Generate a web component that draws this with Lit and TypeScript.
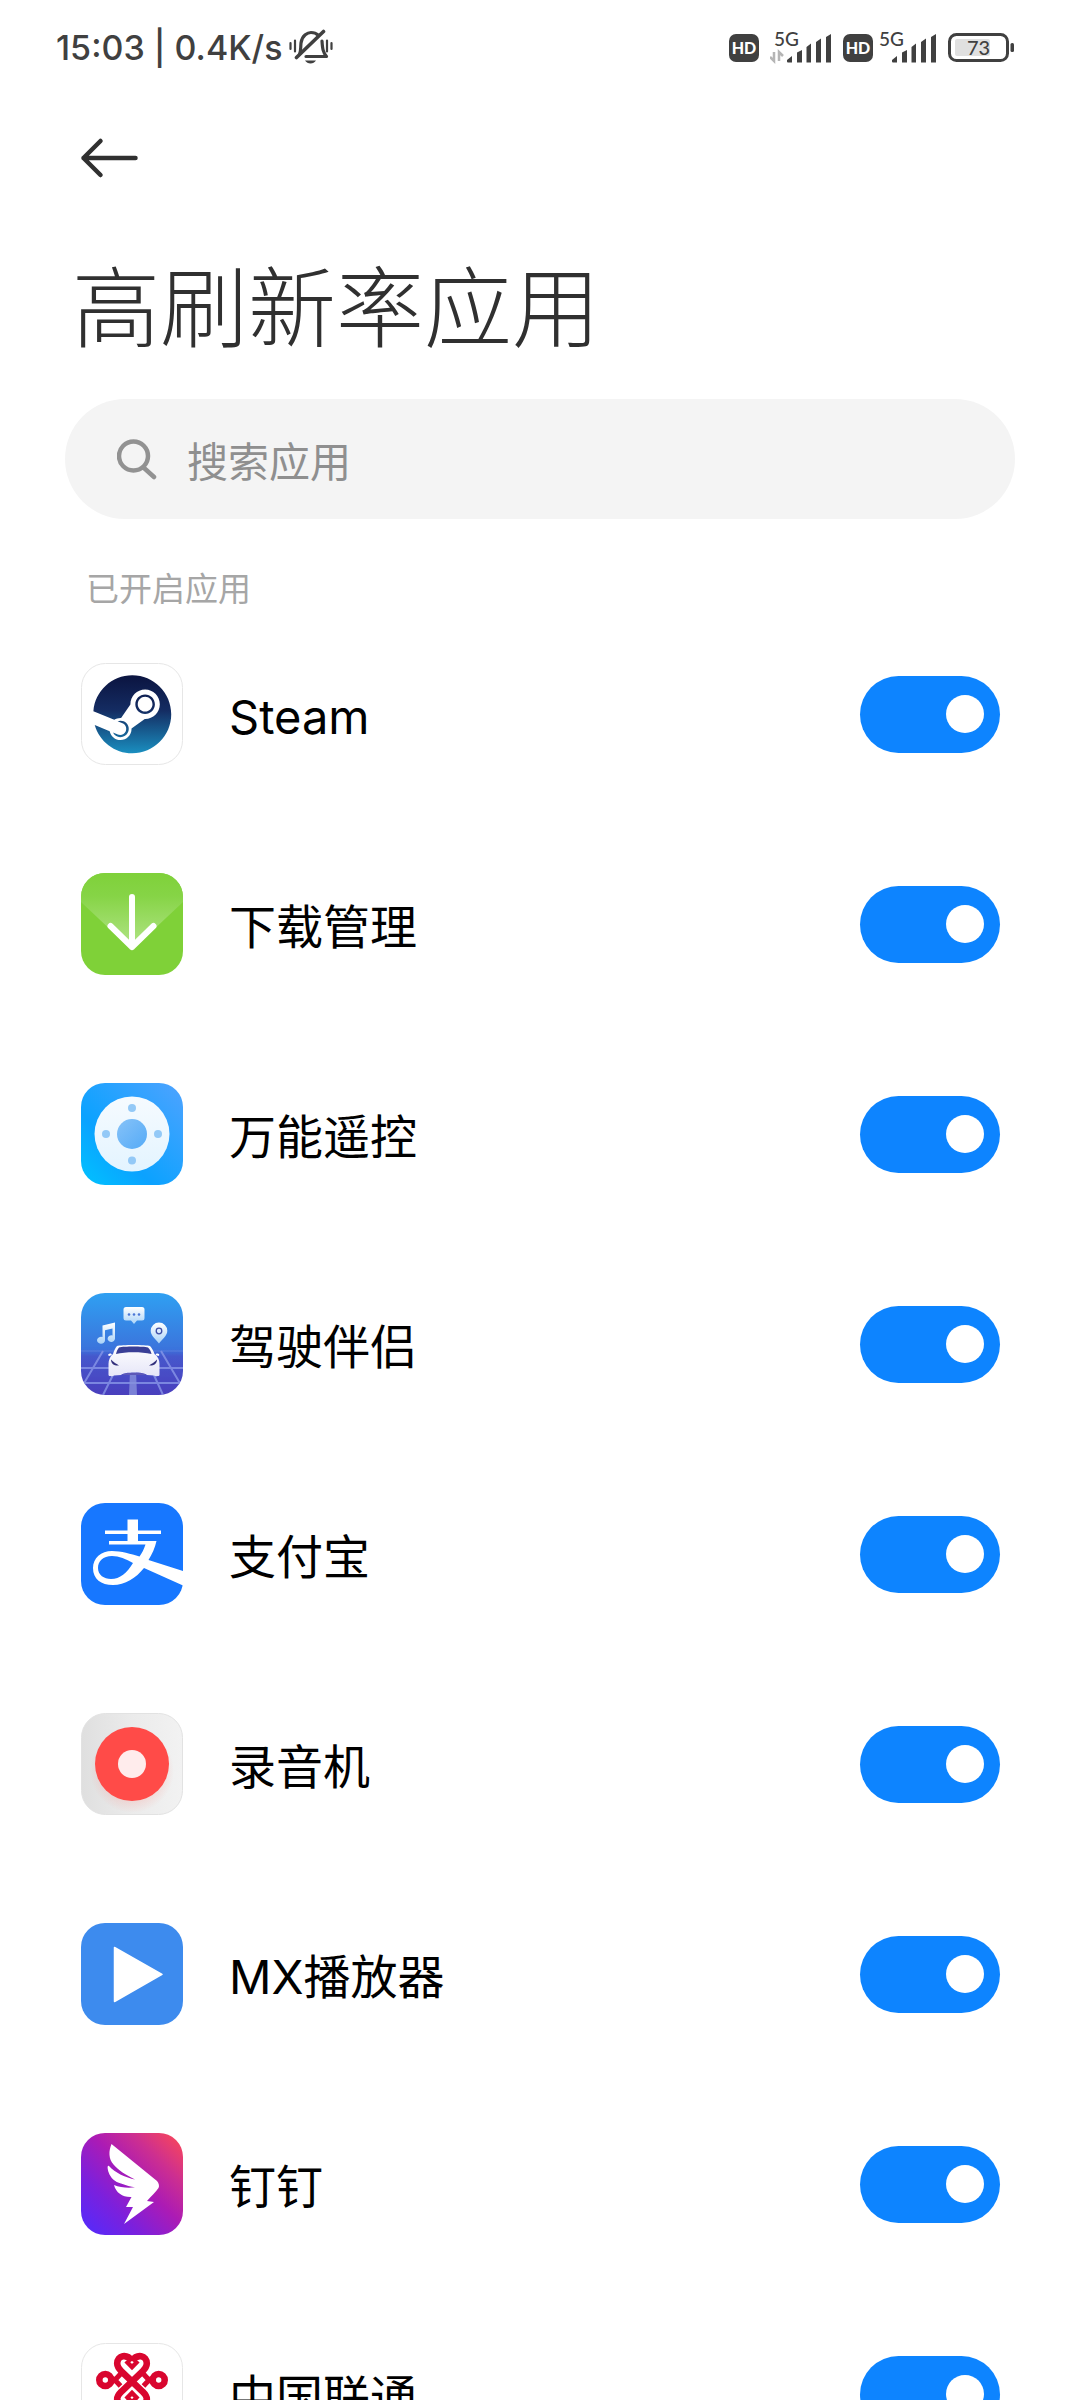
import { LitElement, html, css, svg, type TemplateResult } from "lit";
import { customElement, property, state } from "lit/decorators.js";

interface AppEntry {
  id: string;
  name: string;
  enabled: boolean;
}

const steam = svg`
  <defs>
    <linearGradient id="steam-g" x1="0" y1="0" x2="0" y2="1">
      <stop offset="0" stop-color="#0b1440" />
      <stop offset=".45" stop-color="#142c62" />
      <stop offset="1" stop-color="#1a8fc0" />
    </linearGradient>
  </defs>
  <rect x=".5" y=".5" width="101" height="101" rx="24" fill="#fff" stroke="#e6e6e6" />
  <path transform="translate(12.3 12.3) scale(3.25)" fill="url(#steam-g)" d="M11.979 0C5.678 0 .511 4.86.022 11.037l6.432 2.658c.545-.371 1.203-.59 1.912-.59.063 0 .125.004.188.006l2.861-4.142V8.91c0-2.495 2.028-4.524 4.524-4.524 2.494 0 4.524 2.031 4.524 4.527s-2.03 4.525-4.524 4.525h-.105l-4.076 2.911c0 .052.004.105.004.159 0 1.875-1.515 3.396-3.39 3.396-1.635 0-3.016-1.173-3.331-2.727L.436 15.27C1.862 20.307 6.486 24 11.979 24c6.627 0 11.999-5.373 11.999-12S18.605 0 11.979 0zM7.54 18.21l-1.473-.61c.262.543.714.999 1.314 1.25 1.297.539 2.793-.076 3.332-1.375.263-.63.264-1.319.005-1.949s-.75-1.121-1.377-1.383c-.624-.26-1.29-.249-1.878-.03l1.523.63c.956.4 1.409 1.5 1.009 2.455-.397.957-1.497 1.41-2.454 1.012H7.54zm11.415-9.303c0-1.662-1.353-3.015-3.015-3.015-1.665 0-3.015 1.353-3.015 3.015 0 1.665 1.35 3.015 3.015 3.015 1.663 0 3.015-1.35 3.015-3.015zm-5.273-.005c0-1.252 1.013-2.266 2.265-2.266 1.249 0 2.266 1.014 2.266 2.266 0 1.251-1.017 2.265-2.266 2.265-1.253 0-2.265-1.014-2.265-2.265z" />
`;

const downloads = svg`
  <defs>
    <linearGradient id="dl-v" x1="0" y1="0" x2="0" y2="1">
      <stop offset="0" stop-color="#7fd13a" />
      <stop offset=".3" stop-color="#86d446" />
      <stop offset="1" stop-color="#b4e58a" />
    </linearGradient>
  </defs>
  <rect width="102" height="102" rx="24" fill="#7fd138" />
  <path d="M0 29V24A24 24 0 0 1 24 0H78A24 24 0 0 1 102 24V29L51 77Z" fill="url(#dl-v)" />
  <path d="M51 24V74M29.500 53L51 74L72.500 53" fill="none" stroke="#fff" stroke-width="6" stroke-linecap="round" stroke-linejoin="round" />
`;

const remote = svg`
  <defs>
    <linearGradient id="rm-bg" x1="0" y1="1" x2="1" y2="0">
      <stop offset="0" stop-color="#00c3ff" />
      <stop offset=".35" stop-color="#0ba2ff" />
      <stop offset="1" stop-color="#4fa3ff" />
    </linearGradient>
    <linearGradient id="rm-ring" x1="0" y1="0" x2="0" y2="1">
      <stop offset="0" stop-color="#f6fbff" />
      <stop offset="1" stop-color="#e3f4ff" />
    </linearGradient>
    <linearGradient id="rm-c" x1="0" y1="0" x2="1" y2="1">
      <stop offset="0" stop-color="#86c2f8" />
      <stop offset="1" stop-color="#55abf7" />
    </linearGradient>
  </defs>
  <rect width="102" height="102" rx="24" fill="url(#rm-bg)" />
  <circle cx="51" cy="51" r="37.500" fill="url(#rm-ring)" />
  <circle cx="51" cy="51" r="15" fill="url(#rm-c)" />
  <g fill="#93c9f7">
    <circle cx="51" cy="25" r="4" /><circle cx="51" cy="77.500" r="4" />
    <circle cx="25" cy="51" r="4" /><circle cx="77" cy="51" r="4" />
  </g>
`;

const driving = svg`
  <defs>
    <linearGradient id="dr-bg" x1="0" y1="0" x2="0" y2="1">
      <stop offset="0" stop-color="#2fa0f2" />
      <stop offset=".55" stop-color="#3b74dc" />
      <stop offset=".62" stop-color="#4658cc" />
      <stop offset="1" stop-color="#4a3fbd" />
    </linearGradient>
    <linearGradient id="dr-i" x1="0" y1="0" x2="0" y2="1">
      <stop offset="0" stop-color="#fff" />
      <stop offset="1" stop-color="#a9d3f8" />
    </linearGradient>
    <linearGradient id="dr-car" x1="0" y1="0" x2="0" y2="1">
      <stop offset="0" stop-color="#fff" />
      <stop offset="1" stop-color="#e6e6f8" />
    </linearGradient>
    <clipPath id="dr-clip"><rect width="102" height="102" rx="24" /></clipPath>
  </defs>
  <g clip-path="url(#dr-clip)">
    <rect width="102" height="102" fill="url(#dr-bg)" />
    <g stroke="#8d9bea" stroke-width="2" fill="none" opacity=".75">
      <path d="M0 58H102" stroke-width="1" opacity=".5" />
      <path d="M0 75H102M0 90H102" />
      <path d="M22 58L2 92M34 78L22 102M80 58L100 92M72 80L82 102" />
    </g>
    <path d="M49 78H55L56 102H48Z" fill="#8791dc" opacity=".8" />
    <path d="M45 14H61A2.500 2.500 0 0 1 63.500 16.500V25A2.500 2.500 0 0 1 61 27.500H56L53 31L50 27.500H45A2.500 2.500 0 0 1 42.500 25V16.500A2.500 2.500 0 0 1 45 14Z" fill="url(#dr-i)" />
    <g fill="#4a76d6"><circle cx="48" cy="21.500" r="1.300" /><circle cx="53" cy="21.500" r="1.300" /><circle cx="58" cy="21.500" r="1.300" /></g>
    <path d="M21.500 32.500L34 29.500V45.500A3.700 3.300 0 1 1 31.500 42.500V35.500L24 37.300V47A4 3.500 0 1 1 21.500 44Z" fill="url(#dr-i)" />
    <path d="M78 50.500C75 46.500 69.700 43 69.700 37.800A8.300 8.300 0 0 1 86.300 37.800C86.300 43 81 46.500 78 50.500Z" fill="url(#dr-i)" />
    <circle cx="78" cy="38" r="2.800" fill="#d8ebff" stroke="#3f4fa8" stroke-width="1.300" />
    <path d="M36 53C40 51.600 65 51.600 69 53C71 55 72.500 58 73.500 61C77 63.500 78.500 67 78.500 71V82C78.500 83.500 74 83.500 73 82.500L66 82C64 78.500 42 78.500 40 82L33 82.500C32 83.500 27.500 83.500 27.500 82V71C27.500 67 29 63.500 32 61C33 58 34 55 36 53Z" fill="url(#dr-car)" />
    <path d="M38 54.500C43 53.300 62 53.300 67 54.500C69 56.500 70 58.500 70.500 61C60 58.500 45 58.500 35 61C35.500 58.500 36.500 56.500 38 54.500Z" fill="#3a3f96" />
    <path d="M30 60.500C27 60.500 26.500 62 28 63L31 62ZM75.500 60.500C78.500 60.500 79 62 77.500 63L74.500 62Z" fill="#fff" />
    <path d="M30 66.500C32 69 36 71 38 72.500C34 73 30 71.500 30 66.500ZM76 66.500C74 69 70 71 68 72.500C72 73 76 71.500 76 66.500Z" fill="#33307c" />
    <path d="M41 82C43 79 63 79 65 82Z" fill="#5d58b8" />
  </g>
`;

const alipay = svg`
  <rect width="102" height="102" rx="24" fill="#1777ff" />
  <path d="M46.500 16.500H57V27.500H80V31H57V38H46.500V31H24V27.500H46.500Z" fill="#fff" />
  <path fill-rule="evenodd" fill="#fff" d="M28 38H75.500C74 45 71 51 67.500 57L102 68V82.500L63 65C55 75 44 82 32 82C20 82 12 76 12 65C12 55 20 48 31 48C40 48 50 51 58.500 53.500C61 50 63 46 64.500 41.500H28ZM52 60C45 56 38 53 31 53C22 53 17 58 17 65C17 72 23 76 30 76C39 76 46 70 52 60Z" />
`;

const recorder = svg`
  <defs>
    <linearGradient id="rc-bg" x1="0" y1="0" x2="1" y2="0">
      <stop offset="0" stop-color="#dfdfdf" />
      <stop offset=".5" stop-color="#ebebeb" />
      <stop offset="1" stop-color="#f2f2f2" />
    </linearGradient>
    <radialGradient id="rc-sh">
      <stop offset=".6" stop-color="#ff6a60" stop-opacity=".22" />
      <stop offset="1" stop-color="#ff6a60" stop-opacity="0" />
    </radialGradient>
  </defs>
  <rect x=".5" y=".5" width="101" height="101" rx="24" fill="url(#rc-bg)" stroke="#e2e2e2" />
  <circle cx="51" cy="58" r="42" fill="url(#rc-sh)" />
  <circle cx="51" cy="51" r="37" fill="#ff4b48" />
  <circle cx="51" cy="51" r="14" fill="#ffecec" />
`;

const player = svg`
  <rect width="102" height="102" rx="24" fill="#3d8bee" />
  <path d="M33.500 24.500L81 51.300L33.500 78.500Z" fill="#fff" stroke="#fff" stroke-width="1.500" stroke-linejoin="round" />
`;

const dingtalk = svg`
  <defs>
    <linearGradient id="dt-bg" x1="0" y1="1" x2="1" y2="0">
      <stop offset="0" stop-color="#4f2cff" />
      <stop offset=".3" stop-color="#7c20dc" />
      <stop offset=".55" stop-color="#ac1bb4" />
      <stop offset=".75" stop-color="#cd2f90" />
      <stop offset="1" stop-color="#ff4a52" />
    </linearGradient>
  </defs>
  <rect width="102" height="102" rx="24" fill="url(#dt-bg)" />
  <path fill="#fff" d="M30.500 11C27.500 18 27.500 26 32.500 31.500C37 37 45 42 54 46.500C45 44.500 34 40 28 33C26 32 26.500 36 27.500 39C29.500 45 34 49 40 50.500C45 52.500 50 53.700 54 54.300C47 55.300 39 54.500 33 52C35 60 42 64.500 50.500 64L45 74H52L43 91L73 69L66 68C70 63 75 59 77.500 55C78.500 53 78 50.500 76 48Z" />
`;

const unicom = svg`
  <rect x=".5" y=".5" width="101" height="101" rx="24" fill="#fff" stroke="#e6e6e6" />
  <g fill="none" stroke="#d9062f" stroke-width="6.600">
    <path d="M51 18C46 10.500 36.200 12 36.200 20.500C36.200 24 38 26 41 29L61 48C64 51 65.800 52.500 65.800 56C65.800 62 56 63 51 56" />
    <path d="M51 18C56 10.500 65.800 12 65.800 20.500C65.800 24 64 26 61 29L41 48C38 51 36.200 52.500 36.200 56C36.200 62 46 63 51 56" />
    <path d="M45 18L51 24L57 18M45 56L51 50L57 56" stroke-width="4.500" />
    <path d="M39.500 31L34 37L39.500 43M62.500 31L68 37L62.500 43" stroke-width="5" />
    <circle cx="24.300" cy="37" r="6" /><circle cx="77.700" cy="37" r="6" />
    <path d="M30 37H37M65 37H72" />
  </g>
`;

const ICONS: Record<string, TemplateResult<2>> = {
  steam, downloads, remote, driving, alipay, recorder, player, dingtalk, unicom,
};

@customElement("status-bar")
class StatusBar extends LitElement {
  static styles = css`
    :host { display: block; }
    .bar {
      display: flex;
      align-items: center;
      justify-content: space-between;
      height: 96px;
      padding: 0 64px 0 56px;
      color: #404040;
    }
    .side, .sim { display: flex; align-items: center; }
    .left { gap: 6px; }
    .right { gap: 11px; }
    .sim { gap: 11px; }
    .idle { gap: 5px; }
    .clock { font: 500 34px/44px Inter, "Noto Sans CJK SC", sans-serif; white-space: pre; }
    svg { display: block; }
    text { font-family: Lato, "Liberation Sans", sans-serif; }
  `;

  private hd() {
    return html`<svg width="30" height="28" viewBox="0 0 30 28" role="img" aria-label="HD">
      <rect width="30" height="28" rx="7" fill="#404040" />
      <text x="15" y="19.500" text-anchor="middle" font-size="16" font-weight="900" fill="#fff">HD</text>
    </svg>`;
  }

  private bars(x: number, data: boolean) {
    return html`<svg width=${62 - x} height="50" viewBox="${x} -8 ${62 - x} 50" role="img" aria-label="5G">
      <text x="4" y="15" font-size="19" font-weight="500" fill="#404040">5G</text>
      ${data
        ? svg`<path d="M4 21V30L0 26M9 30V21L13 25" fill="none" stroke="#b5b5b5" stroke-width="2.500" />`
        : ""}
      <path fill="#404040" d="M17 29L22 25V31.500H18Q17 31.500 17 30.500ZM27 21.500L32 19V31.500H27ZM36.500 16L41 12.500V31.500H36.500ZM46 11L51 7.500V31.500H46ZM56 6L61 3V31.500H56Z" />
    </svg>`;
  }

  render() {
    return html`<header class="bar">
      <div class="side left">
        <span class="clock">15:03 | 0.4K/s</span>
        <svg width="44" height="38" viewBox="0 0 44 38" fill="none" stroke="#404040" role="img" aria-label="静音">
          <path d="M10.500 25.500C12 22 11.500 19 12 14C13 6 19 3.500 22 3.500C25 3.500 27.500 4.500 29 6" stroke-width="3.200" />
          <path d="M33 12C33.500 20 34 23 37.500 27.500H17" stroke-width="3.200" stroke-linejoin="round" stroke-linecap="round" />
          <path d="M7.500 28.500L34.500 2.500" stroke-width="3.600" stroke-linecap="round" />
          <path d="M16 31.500H27Q25 34.500 21.500 34.500T16 31.500Z" fill="#404040" stroke="none" />
          <path d="M1.500 14V20M6 11.500V22.500M38 11.500V22.500M42.500 14V20" stroke-width="2.200" stroke-linecap="round" />
        </svg>
      </div>
      <div class="side right">
        <div class="sim">${this.hd()} ${this.bars(0, true)}</div>
        <div class="sim idle">${this.hd()} ${this.bars(3, false)}</div>
        <svg width="68" height="30" viewBox="0 0 68 30" role="img" aria-label="73%">
          <rect x="1.500" y="1.500" width="58" height="26" rx="7" fill="#fff" stroke="#404040" stroke-width="3" />
          <rect x="7" y="6" width="35" height="17" rx="2" fill="#e0e0e0" />
          <text x="30.500" y="21.500" text-anchor="middle" font-size="20" font-weight="500" fill="#404040">73</text>
          <rect x="62.500" y="10" width="3.500" height="9" rx="1.500" fill="#404040" />
        </svg>
      </div>
    </header>`;
  }
}

@customElement("app-row")
class AppRow extends LitElement {
  @property({ attribute: false }) entry!: AppEntry;

  static styles = css`
    :host { display: block; }
    .row {
      display: flex;
      align-items: center;
      gap: 46px;
      height: 210px;
      padding: 0 80px 0 81px;
      cursor: pointer;
    }
    .icon { flex: none; width: 102px; height: 102px; }
    .name {
      flex: 1;
      padding-top: 5px;
      color: #000;
      font: 400 47px/64px Inter, "Noto Sans CJK SC", sans-serif;
    }
    .switch {
      appearance: none;
      flex: none;
      display: flex;
      align-items: center;
      box-sizing: border-box;
      width: 140px;
      height: 77px;
      margin: 0;
      padding: 0 16px;
      border-radius: 39px;
      background: #d9d9d9;
      cursor: pointer;
    }
    .switch::before {
      content: "";
      width: 38px;
      height: 38px;
      border-radius: 50%;
      background: #fff;
    }
    .switch:checked { justify-content: flex-end; background: #0d84ff; }
  `;

  private toggle(e: Event) {
    const checked = (e.target as HTMLInputElement).checked;
    this.dispatchEvent(new CustomEvent("toggled", { detail: { id: this.entry.id, checked } }));
  }

  render() {
    return html`<label class="row">
      <svg class="icon" viewBox="0 0 102 102" aria-hidden="true">${ICONS[this.entry.id]}</svg>
      <span class="name">${this.entry.name}</span>
      <input class="switch" type="checkbox" role="switch" .checked=${this.entry.enabled} @change=${this.toggle} />
    </label>`;
  }
}

@customElement("app-root")
class AppRoot extends LitElement {
  @state() private apps: AppEntry[] = [
    { id: "steam", name: "Steam", enabled: true },
    { id: "downloads", name: "下载管理", enabled: true },
    { id: "remote", name: "万能遥控", enabled: true },
    { id: "driving", name: "驾驶伴侣", enabled: true },
    { id: "alipay", name: "支付宝", enabled: true },
    { id: "recorder", name: "录音机", enabled: true },
    { id: "player", name: "MX播放器", enabled: true },
    { id: "dingtalk", name: "钉钉", enabled: true },
    { id: "unicom", name: "中国联通", enabled: true },
  ];

  static styles = css`
    :host {
      display: block;
      background: #fff;
      font-family: "Noto Sans CJK SC", sans-serif;
    }
    .screen {
      display: flex;
      flex-direction: column;
      height: 100vh;
      overflow: hidden;
    }
    .nav { display: flex; padding: 32px 72px; }
    .back {
      display: block;
      padding: 8px;
      border: 0;
      background: none;
      cursor: pointer;
    }
    .back svg, .search svg { display: block; }
    .title {
      margin: 0;
      padding: 30px 72px 45px;
      color: #303030;
      font-size: 88px;
      font-weight: 300;
      line-height: 104px;
    }
    .search {
      display: flex;
      align-items: center;
      gap: 30px;
      height: 120px;
      margin: 0 65px;
      padding: 0 52px;
      border-radius: 60px;
      background: #f4f4f4;
    }
    .field {
      flex: 1;
      min-width: 0;
      padding: 0;
      border: 0;
      outline: 0;
      background: none;
      color: #222;
      font: 400 41px/56px "Noto Sans CJK SC", sans-serif;
    }
    .field::placeholder { color: #8f8f8f; opacity: 1; }
    .section {
      margin: 0;
      padding: 46px 86px 0;
      color: #a6a6a6;
      font-size: 33px;
      font-weight: 400;
      line-height: 44px;
    }
    .list {
      flex: 1;
      min-height: 0;
      margin: 0;
      padding: 0;
      overflow-y: auto;
      scrollbar-width: none;
      list-style: none;
    }
  `;

  private setEnabled(e: CustomEvent<{ id: string; checked: boolean }>) {
    const { id, checked } = e.detail;
    this.apps = this.apps.map((a) => (a.id === id ? { ...a, enabled: checked } : a));
  }

  render() {
    return html`<div class="screen">
      <status-bar></status-bar>
      <nav class="nav">
        <button class="back" aria-label="返回">
          <svg width="60" height="44" viewBox="0 0 60 44" fill="none" stroke="#303030" stroke-width="4.500" stroke-linecap="round" stroke-linejoin="round">
            <path d="M20.500 5L3.500 22L20.500 39M3.500 22H55.500" />
          </svg>
        </button>
      </nav>
      <h1 class="title">高刷新率应用</h1>
      <label class="search">
        <svg width="40" height="42" viewBox="0 0 40 42" fill="none" stroke="#929292" stroke-width="4.500" stroke-linecap="round" aria-hidden="true">
          <circle cx="16.500" cy="18" r="14.500" /><path d="M26.500 29.500L37 39" />
        </svg>
        <input class="field" type="text" placeholder="搜索应用" aria-label="搜索应用" />
      </label>
      <h2 class="section">已开启应用</h2>
      <ul class="list">
        ${this.apps.map((a) => html`<li><app-row .entry=${a} @toggled=${this.setEnabled}></app-row></li>`)}
      </ul>
    </div>`;
  }
}
